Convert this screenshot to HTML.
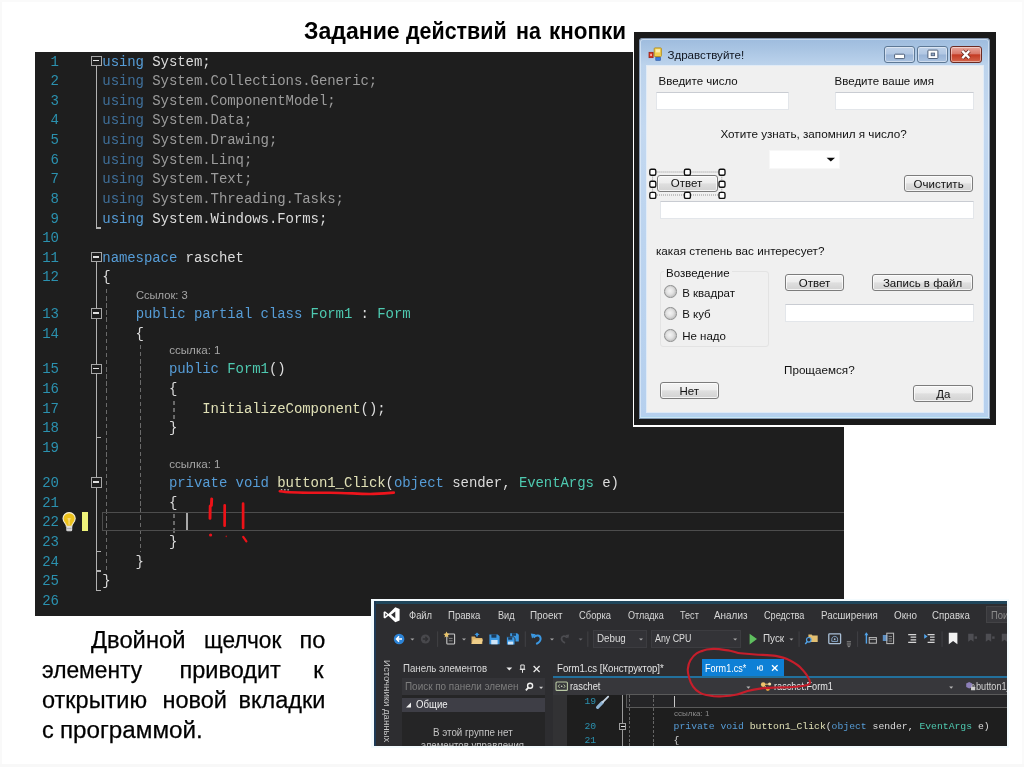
<!DOCTYPE html>
<html lang="ru">
<head>
<meta charset="utf-8">
<title>Задание действий на кнопки</title>
<style>
*{box-sizing:border-box;margin:0;padding:0}
html,body{width:1024px;height:767px;overflow:hidden;background:#fff}
body{position:relative;font-family:"Liberation Sans",sans-serif;color:#000}
.abs{position:absolute}
#edgeL{left:0;top:0;width:2px;height:767px;background:#f9f9f9}
#edgeR{left:1021.5px;top:0;width:2.5px;height:767px;background:#fafafa}
#edgeB{left:0;top:764px;width:1024px;height:3px;background:#f8f8f8}
#edgeT{left:0;top:0;width:1024px;height:2px;background:#fafafa}
.tw{filter:blur(0.25px);top:14px;font-weight:bold;font-size:23.5px;line-height:34px;height:34px;white-space:nowrap;color:#000;transform-origin:0 50%}
/* ---------- big code editor ---------- */
#code{left:34.5px;top:51.5px;width:809.7px;height:564.7px;background:#1e1e1e;overflow:hidden;font-family:"Liberation Mono",monospace;font-size:14px;letter-spacing:-0.0714px;color:#dcdcdc}
#codei{position:absolute;left:0;top:0;width:100%;height:100%;filter:blur(0.35px)}
#code .l{position:absolute;left:0;width:810px;height:19.63px;line-height:19.63px;white-space:pre}
#code .n{position:absolute;left:0;width:24.3px;text-align:right;color:#2b91af}
#code .t{position:absolute;left:67.8px}
#code .cl{position:absolute;font-family:"Liberation Sans",sans-serif;font-size:11.2px;letter-spacing:0;color:#a6a6a6;height:16.3px;line-height:16.3px;white-space:pre}
.k{color:#569cd6}.ty{color:#4ec9b0}.m{color:#e0e0b6}
.dk{color:#3f6f99}.dt{color:#9b9b9b}
.vl{position:absolute;width:1.4px;background:#b2b2b2}
.hl{position:absolute;height:1.4px;background:#b2b2b2}
.dg{position:absolute;width:1.6px;background:repeating-linear-gradient(to bottom,#6a6a6a 0,#6a6a6a 4.4px,transparent 4.4px,transparent 7.1px)}
.cb{position:absolute;width:11.2px;height:10.2px;border:1.3px solid #a6a6a6;background:#1e1e1e}
.cb i{position:absolute;left:1.5px;top:3.0px;width:5.6px;height:1.6px;background:#e0e0e0}
/* ---------- bottom-left paragraph ---------- */
.pw{filter:blur(0.25px);font-size:23.5px;line-height:30px;height:30px;white-space:nowrap;color:#000;-webkit-text-stroke:0.25px #000}
</style>
</head>
<body>
<div id="edgeL" class="abs"></div><div id="edgeR" class="abs"></div><div id="edgeB" class="abs"></div><div id="edgeT" class="abs"></div>
<div id="title"><span class="abs tw" style="left:304px;transform:scaleX(0.981)">Задание</span><span class="abs tw" style="left:406.2px;transform:scaleX(0.912)">действий</span><span class="abs tw" style="left:515.8px;transform:scaleX(0.913)">на</span><span class="abs tw" style="left:549px;transform:scaleX(0.954)">кнопки</span></div>
<div id="code" class="abs"><div id="codei">
<div class="l" style="top:1.00px"><span class="n">1</span><span class="t"><span class="k">using</span> System;</span></div>
<div class="l" style="top:20.63px"><span class="n">2</span><span class="t"><span class="dk">using</span><span class="dt"> System.Collections.Generic;</span></span></div>
<div class="l" style="top:40.26px"><span class="n">3</span><span class="t"><span class="dk">using</span><span class="dt"> System.ComponentModel;</span></span></div>
<div class="l" style="top:59.89px"><span class="n">4</span><span class="t"><span class="dk">using</span><span class="dt"> System.Data;</span></span></div>
<div class="l" style="top:79.52px"><span class="n">5</span><span class="t"><span class="dk">using</span><span class="dt"> System.Drawing;</span></span></div>
<div class="l" style="top:99.15px"><span class="n">6</span><span class="t"><span class="dk">using</span><span class="dt"> System.Linq;</span></span></div>
<div class="l" style="top:118.78px"><span class="n">7</span><span class="t"><span class="dk">using</span><span class="dt"> System.Text;</span></span></div>
<div class="l" style="top:138.41px"><span class="n">8</span><span class="t"><span class="dk">using</span><span class="dt"> System.Threading.Tasks;</span></span></div>
<div class="l" style="top:158.04px"><span class="n">9</span><span class="t"><span class="k">using</span> System.Windows.Forms;</span></div>
<div class="l" style="top:177.67px"><span class="n">10</span><span class="t"></span></div>
<div class="l" style="top:197.30px"><span class="n">11</span><span class="t"><span class="k">namespace</span> raschet</span></div>
<div class="l" style="top:216.93px"><span class="n">12</span><span class="t">{</span></div>
<div class="cl" style="left:101.4px;top:235.16px;font-size:11.2px">Ссылок: 3</div>
<div class="l" style="top:253.56px"><span class="n">13</span><span class="t">    <span class="k">public</span> <span class="k">partial</span> <span class="k">class</span> <span class="ty">Form1</span> : <span class="ty">Form</span></span></div>
<div class="l" style="top:273.19px"><span class="n">14</span><span class="t">    {</span></div>
<div class="cl" style="left:134.7px;top:290.92px;font-size:11.6px">ссылка: 1</div>
<div class="l" style="top:308.82px"><span class="n">15</span><span class="t">        <span class="k">public</span> <span class="ty">Form1</span>()</span></div>
<div class="l" style="top:328.45px"><span class="n">16</span><span class="t">        {</span></div>
<div class="l" style="top:348.08px"><span class="n">17</span><span class="t">            <span class="m">InitializeComponent</span>();</span></div>
<div class="l" style="top:367.71px"><span class="n">18</span><span class="t">        }</span></div>
<div class="l" style="top:387.34px"><span class="n">19</span><span class="t"></span></div>
<div class="cl" style="left:134.7px;top:404.87px;font-size:11.6px">ссылка: 1</div>
<div class="l" style="top:422.57px"><span class="n">20</span><span class="t">        <span class="k">private</span> <span class="k">void</span> <span class="m">button1_Click</span>(<span class="k">object</span> sender, <span class="ty">EventArgs</span> e)</span></div>
<div class="l" style="top:442.20px"><span class="n">21</span><span class="t">        {</span></div>
<div class="l" style="top:461.83px"><span class="n">22</span><span class="t"></span></div>
<div class="l" style="top:481.46px"><span class="n">23</span><span class="t">        }</span></div>
<div class="l" style="top:501.09px"><span class="n">24</span><span class="t">    }</span></div>
<div class="l" style="top:520.72px"><span class="n">25</span><span class="t">}</span></div>
<div class="l" style="top:540.35px"><span class="n">26</span><span class="t"></span></div>
<div class="vl" style="left:61.40px;top:11.00px;height:166.17px"></div>
<div class="hl" style="left:61.40px;top:175.77px;width:5.35px"></div>
<div class="vl" style="left:61.40px;top:207.30px;height:332.55px"></div>
<div class="hl" style="left:61.40px;top:385.44px;width:5.35px"></div>
<div class="hl" style="left:61.40px;top:499.19px;width:5.35px"></div>
<div class="hl" style="left:61.40px;top:518.82px;width:5.35px"></div>
<div class="hl" style="left:61.40px;top:538.45px;width:5.35px"></div>
<div class="dg" style="left:71.30px;top:237.56px;height:282.16px"></div>
<div class="dg" style="left:105.00px;top:293.82px;height:206.27px"></div>
<div class="dg" style="left:138.60px;top:349.08px;height:18.63px"></div>
<div class="dg" style="left:138.60px;top:462.83px;height:18.63px"></div>
<div class="cb" style="left:56.10px;top:4.30px"><i></i></div>
<div class="cb" style="left:56.10px;top:200.60px"><i></i></div>
<div class="cb" style="left:56.10px;top:256.86px"><i></i></div>
<div class="cb" style="left:56.10px;top:312.12px"><i></i></div>
<div class="cb" style="left:56.10px;top:425.87px"><i></i></div>
<div class="abs" style="left:67.20px;top:460.40px;width:760px;height:18.90px;border:1.9px solid #4d4d4d"></div>
<div class="abs" style="left:151.50px;top:461.10px;width:1.5px;height:17.6px;background:#a8a8a8"></div>
<div class="abs" style="left:47.40px;top:460.20px;width:6.3px;height:19.4px;background:#eff37a"></div>
<svg class="abs" style="left:0;top:0" width="810" height="564.7" viewBox="34.5 51.5 810 564.7" fill="none">
<!-- lightbulb -->
<g>
<path d="M68.6 512.1c-3.6 0-6.1 2.7-6.1 6 0 2.3 1.2 3.7 2.3 5 0.8 0.9 1 1.6 1 2.6h5.6c0-1 0.2-1.7 1-2.6 1.1-1.3 2.3-2.7 2.3-5 0-3.3-2.5-6-6.1-6z" fill="#edc21c" stroke="#f6efd8" stroke-width="1.1"/>
<path d="M66.9 517.4h3.4l-1 3.2v3.6h-1.4v-3.6z" fill="#f6d978"/>
<rect x="65.8" y="525.8" width="5.9" height="5" rx="1.3" fill="#e6e6e6"/>
<rect x="66.4" y="527.3" width="4.7" height="0.9" fill="#9a9a9a"/>
<rect x="66.4" y="529.2" width="4.7" height="0.8" fill="#b0b0b0"/>
</g>
<!-- suggestion dots -->
<g fill="#bdbdbd"><rect x="280.3" y="488.6" width="1.5" height="1.4"/><rect x="283.6" y="488.6" width="1.5" height="1.4"/><rect x="286.9" y="488.6" width="1.5" height="1.4"/></g>
<!-- red hand-drawn underline -->
<path d="M279.3 490.8c10 1.6 30 1.6 48 1.4 20-0.2 30 1.6 46 1.2 9-0.2 15-0.7 20-1.3" stroke="#ee141c" stroke-width="2.6" stroke-linecap="round"/>
<!-- red strokes -->
<path d="M211.2 498.4l-0.3 6.5l-1.2 0.6l-0.2 12.4" stroke="#ee1218" stroke-width="2.9" stroke-linecap="round" stroke-linejoin="round"/>
<path d="M224.2 504.8l-0.1 20.4" stroke="#ee1218" stroke-width="2.7" stroke-linecap="round"/>
<path d="M242.6 503.2l0 24.2" stroke="#ee1218" stroke-width="2.7" stroke-linecap="round"/>
<circle cx="210.1" cy="534.5" r="1.6" fill="#e8131d"/>
<circle cx="225.8" cy="535.9" r="0.8" fill="#b01318"/>
<path d="M242.7 536.3l3.2 4.6" stroke="#ee1218" stroke-width="2.2" stroke-linecap="round"/>
</svg>


</div></div>
<div id="para">
<span class="abs pw" style="left:91.3px;top:624.66px;transform:scaleX(1.01);transform-origin:0 50%">Двойной</span>
<span class="abs pw" style="left:203.5px;top:624.66px;transform:scaleX(0.965);transform-origin:0 50%">щелчок</span>
<span class="abs pw" style="left:299.5px;top:624.66px">по</span>
<span class="abs pw" style="left:42.0px;top:654.66px;transform:scaleX(0.97);transform-origin:0 50%">элементу</span>
<span class="abs pw" style="left:179.5px;top:654.66px">приводит</span>
<span class="abs pw" style="left:313.3px;top:654.66px">к</span>
<span class="abs pw" style="left:42.0px;top:684.76px">открытию</span>
<span class="abs pw" style="left:162.5px;top:684.76px">новой</span>
<span class="abs pw" style="left:238.5px;top:684.76px">вкладки</span>
<span class="abs pw" style="left:42.0px;top:714.66px">с</span>
<span class="abs pw" style="left:59.5px;top:714.66px;transform:scaleX(1.03);transform-origin:0 50%">программой.</span>
</div>
<style>
#fwrap{left:632.6px;top:30.8px;width:365.2px;height:396.5px;background:#fff}
#fblack{left:634.3px;top:32.4px;width:361.8px;height:393.1px;background:#1a1a1a}
#fframe{left:639.4px;top:37.6px;width:350.8px;height:381.2px;border-radius:4px 4px 1px 1px;background:linear-gradient(to bottom,#9dbbdd 0,#abc6e4 13px,#bcd3ec 27px,#c3d8f0 90px,#bcd4ef 200px,#b6d0ee 381px);box-shadow:inset 0 0 0 1px rgba(70,90,120,.55),inset 0 0 0 2px rgba(230,240,250,.6),inset 0 -3px 0 -0.5px #a6d8ef}
#fclient{left:647px;top:66.2px;width:336.2px;height:345.4px;background:#f0f0f0;box-shadow:0 0 0 1px rgba(255,255,255,.55)}
.ft{font-size:11.5px;line-height:14px;height:14px;white-space:nowrap;color:#111;transform-origin:0 50%}
.ftb{position:absolute;background:#fff;border:1px solid #e3e6ea;border-top-color:#c9ccd2}
.fbtn{position:absolute;border:1px solid #7c7c7c;border-radius:3px;background:linear-gradient(to bottom,#f4f4f4 0,#ededed 46%,#dfdfdf 52%,#d2d2d2 100%);box-shadow:inset 0 0 0 1px rgba(255,255,255,.75);font-size:11.5px;color:#111;text-align:center;white-space:nowrap}
.fbtn span{display:inline-block}
.frad{position:absolute;width:12.6px;height:12.6px;border-radius:50%;border:1px solid #8e8f8f;background:radial-gradient(circle at 45% 45%,#f4f4f4 0,#e2e2e2 40%,#c6c6c6 68%,#ececec 100%)}
.wbtn{position:absolute;top:45.6px;height:17.1px;border:1px solid #5d7895;border-radius:3px;box-shadow:inset 0 0 0 1px rgba(255,255,255,.45)}
</style>
<div id="fwrap" class="abs"></div>
<div id="fblack" class="abs"></div>
<div id="fin" style="position:absolute;left:0;top:0;width:1024px;height:767px;filter:blur(0.3px)">
<div id="fframe" class="abs"></div>
<div id="fclient" class="abs"></div>
<!-- title bar -->
<svg class="abs" style="left:647px;top:46px" width="18" height="16" viewBox="647 46 18 16">
<rect x="654.2" y="47.9" width="7.2" height="8.6" rx="0.8" fill="#f2cf4e" stroke="#b38d1f" stroke-width="0.9"/>
<rect x="655.6" y="49.2" width="4.4" height="3.2" fill="#fbeeb0"/>
<rect x="649" y="52.3" width="4.1" height="5.4" fill="#d9331f" stroke="#8f1e12" stroke-width="0.7"/>
<rect x="650.3" y="53.8" width="1.5" height="2.2" fill="#f7c9c0"/>
<rect x="655.8" y="57.4" width="4.6" height="2.9" fill="#3a7be0" stroke="#244f9a" stroke-width="0.6"/>
</svg>
<div class="abs ft" id="ftitle" style="left:667.4px;top:46.6px;font-size:11.6px;line-height:16px;height:16px;color:#10151f">Здравствуйте!</div>
<div class="wbtn" style="left:884.2px;width:31.2px;background:linear-gradient(to bottom,#c0d2e9 0,#b1c7e3 47%,#99b4d7 53%,#aac2e0 100%)"></div>
<div class="wbtn" style="left:917.4px;width:30.9px;background:linear-gradient(to bottom,#c0d2e9 0,#b1c7e3 47%,#99b4d7 53%,#aac2e0 100%)"></div>
<div class="wbtn" style="left:950.1px;width:31.5px;border-color:#6b2a22;background:linear-gradient(to bottom,#e8a79c 0,#d9786a 46%,#c43a24 52%,#d4664c 100%)"></div>
<svg class="abs" style="left:884px;top:45px" width="100" height="19" viewBox="884 45 100 19">
<rect x="894.6" y="54.2" width="10" height="4.4" rx="0.8" fill="#fff" stroke="#50607a" stroke-width="1"/>
<rect x="927.9" y="50.1" width="10" height="8.4" rx="0.8" fill="#fff" stroke="#50607a" stroke-width="1"/>
<rect x="931.2" y="53.1" width="3.4" height="2.6" fill="#8fa6c6" stroke="#50607a" stroke-width="0.9"/>
<path d="M962.3 50.9l7 7.2M969.3 50.9l-7 7.2" stroke="#5f241b" stroke-width="3.7" fill="none"/><path d="M962.3 50.9l7 7.2M969.3 50.9l-7 7.2" stroke="#fff" stroke-width="2.3" fill="none"/>
</svg>
<!-- row 1 -->
<div class="abs ft" id="fl1" style="left:658.6px;top:73.5px">Введите число</div>
<div class="abs ft" id="fl2" style="left:834.6px;top:73.5px">Введите ваше имя</div>
<div class="ftb" style="left:656.3px;top:92.4px;width:132.4px;height:17.6px"></div>
<div class="ftb" style="left:834.6px;top:92.4px;width:139.2px;height:17.6px"></div>
<div class="abs ft" id="fl3" style="left:720.4px;top:126.6px;font-size:11.7px">Хотите узнать, запомнил я число?</div>
<div class="ftb" style="left:769.2px;top:150.3px;width:70.6px;height:18.5px;border-color:#f7f7f7"></div>
<svg class="abs" style="left:824px;top:155px" width="14" height="9" viewBox="824 155 14 9"><path d="M826.6 157.8h8.4l-4.2 3.6z" fill="#0a0a0a"/></svg>
<!-- button with selection handles -->
<div class="fbtn" id="fb1" style="left:657px;top:175.3px;width:61.3px;height:16.3px;line-height:14.6px"><span style="position:relative;left:-1.1px">Ответ</span></div>
<svg class="abs" style="left:649px;top:168px" width="78" height="31" viewBox="649 168 78 31" fill="none">
<rect x="652.6" y="172" width="69.2" height="23" stroke="#8a8a8a" stroke-width="0.9" stroke-dasharray="1 1"/>
<g fill="#fff" stroke="#101010" stroke-width="1.35">
<rect x="649.8" y="169.2" width="6" height="6" rx="1.5"/><rect x="684.4" y="169.2" width="6" height="6" rx="1.5"/><rect x="719" y="169.2" width="6" height="6" rx="1.5"/>
<rect x="649.8" y="181.2" width="6" height="6" rx="1.5"/><rect x="719" y="181.2" width="6" height="6" rx="1.5"/>
<rect x="649.8" y="192.4" width="6" height="6" rx="1.5"/><rect x="684.4" y="192.4" width="6" height="6" rx="1.5"/><rect x="719" y="192.4" width="6" height="6" rx="1.5"/>
</g></svg>
<div class="fbtn" id="fb2" style="left:904px;top:174.5px;width:69.2px;height:17.5px;line-height:16.6px"><span>Очистить</span></div>
<div class="ftb" style="left:659.8px;top:201px;width:313.8px;height:17.7px"></div>
<!-- lower part -->
<div class="abs ft" id="fl4" style="left:656px;top:244px;font-size:11.7px">какая степень вас интересует?</div>
<div class="abs" style="left:660px;top:271.3px;width:109.2px;height:75.3px;border:1px solid #e3e3e3;border-radius:3px"></div>
<div class="abs ft" id="fl5" style="left:664px;top:266.2px;background:#f0f0f0;padding:0 2px">Возведение</div>
<div class="frad" style="left:664.3px;top:285.4px"></div>
<div class="frad" style="left:664.3px;top:307.2px"></div>
<div class="frad" style="left:664.3px;top:329px"></div>
<div class="abs ft" id="fr1" style="left:682.2px;top:285.6px">В квадрат</div>
<div class="abs ft" id="fr2" style="left:682.2px;top:307.4px">В куб</div>
<div class="abs ft" id="fr3" style="left:682.2px;top:329.2px">Не надо</div>
<div class="fbtn" id="fb3" style="left:784.8px;top:274.3px;width:59.6px;height:17.1px;line-height:16.8px"><span>Ответ</span></div>
<div class="fbtn" id="fb4" style="left:872px;top:274.3px;width:101.1px;height:17.1px;line-height:16.8px"><span>Запись в файл</span></div>
<div class="ftb" style="left:784.8px;top:304px;width:189px;height:17.8px"></div>
<div class="abs ft" id="fl6" style="left:784px;top:363px;transform:scaleX(1.015)">Прощаемся?</div>
<div class="fbtn" id="fb5" style="left:660px;top:382px;width:58.6px;height:16.9px;line-height:17.6px"><span>Нет</span></div>
<div class="fbtn" id="fb6" style="left:913.4px;top:384.8px;width:59.7px;height:16.9px;line-height:17.2px"><span>Да</span></div>
</div>
<style>
#vswrap{left:371.4px;top:598.8px;width:637.2px;height:149px;background:#f4fbfe}
#vs{left:373.6px;top:601px;width:633.7px;height:145.4px;background:#2d2d30;overflow:hidden}
#vsi{filter:blur(0.55px);position:absolute;left:-373.6px;top:-601px;width:1024px;height:767px;font-size:10px;color:#d2d2d2}
#vsi .a{position:absolute;white-space:nowrap}
#vsi .mn{position:absolute;top:608.6px;height:13px;line-height:13px;font-size:10.2px;color:#d6d6d6;white-space:nowrap;transform-origin:0 50%}
#vsi .tb{position:absolute;white-space:nowrap;font-size:10.2px;line-height:13px;height:13px;color:#dcdcdc}
#vsi .cm{font-family:"Liberation Mono",monospace;font-size:9.75px;letter-spacing:0;white-space:pre;line-height:13px;height:13px;position:absolute;color:#dcdcdc}
</style>
<div id="vswrap" class="abs"></div>
<div id="vs" class="abs"><div id="vsi">
<!-- window edges -->
<div class="a" style="left:372.8px;top:600px;width:636px;height:3.6px;background:#20465b"></div>
<div class="a" style="left:372.6px;top:600px;width:3.8px;height:148px;background:#1e3a56"></div>
<!-- menu bar -->
<svg class="a" style="left:382px;top:606px" width="20" height="18" viewBox="382 606 20 18"><path d="M395.3 607.3l4.3 1.8v11.4l-4.3 1.8l-6.9-6.6l-3.4 2.7l-1.4-0.7v-5.8l1.4-0.7l3.4 2.7zM395.3 611.4l-4.2 3.4l4.2 3.4zM385.3 613.1v3.4l1.8-1.7z" fill="#fff" fill-rule="evenodd"/></svg>
<span class="mn" style="left:409.2px;transform:scaleX(0.922)">Файл</span>
<span class="mn" style="left:448.3px;transform:scaleX(0.941)">Правка</span>
<span class="mn" style="left:497.7px;transform:scaleX(0.900)">Вид</span>
<span class="mn" style="left:530.3px;transform:scaleX(0.968)">Проект</span>
<span class="mn" style="left:578.5px;transform:scaleX(0.920)">Сборка</span>
<span class="mn" style="left:627.7px;transform:scaleX(0.889)">Отладка</span>
<span class="mn" style="left:679.9px;transform:scaleX(0.892)">Тест</span>
<span class="mn" style="left:714.4px;transform:scaleX(0.974)">Анализ</span>
<span class="mn" style="left:764.2px;transform:scaleX(0.895)">Средства</span>
<span class="mn" style="left:821.2px;transform:scaleX(0.959)">Расширения</span>
<span class="mn" style="left:893.6px;transform:scaleX(0.967)">Окно</span>
<span class="mn" style="left:931.8px;transform:scaleX(0.946)">Справка</span>
<div class="a" style="left:986px;top:605.8px;width:30px;height:17.2px;background:#38383c;border:1px solid #434346"></div>
<span class="mn" style="left:990.6px;color:#8c8c8c;transform:scaleX(0.930)">Поиск</span>
<!-- toolbar combos -->
<div class="a" style="left:593.4px;top:630px;width:53.2px;height:17.6px;background:#333337;border:1px solid #3c3c40"></div>
<div class="a" style="left:651.3px;top:630px;width:89.7px;height:17.6px;background:#333337;border:1px solid #3c3c40"></div>
<span class="tb" id="tbdebug" style="left:597.2px;top:632.2px;transform:scaleX(0.959);transform-origin:0 50%">Debug</span>
<span class="tb" id="tbcpu" style="left:654.6px;top:632.2px;transform:scaleX(0.869);transform-origin:0 50%">Any CPU</span>
<span class="tb" id="tbrun" style="left:763.4px;top:632.2px;transform:scaleX(0.970);transform-origin:0 50%">Пуск</span>
<!-- toolbox panel -->
<div class="a" style="left:402.2px;top:659px;width:143.2px;height:90px;background:#252526"></div>
<div class="a" style="left:402.2px;top:659px;width:143.2px;height:19px;background:#2d2d30"></div>
<div class="a" style="left:402.2px;top:678px;width:143.2px;height:17.4px;background:#343438"></div>
<div class="a" style="left:402.2px;top:697.5px;width:143.2px;height:14.9px;background:#3e3e46"></div>
<span class="tb" id="tbx1" style="left:403.4px;top:662px;color:#d8d8d8;transform:scaleX(0.949);transform-origin:0 50%">Панель элементов</span>
<span class="tb" id="tbx2" style="left:404.8px;top:680.2px;color:#7e7e7e;transform:scaleX(0.973);transform-origin:0 50%">Поиск по панели элемен</span>
<span class="tb" id="tbx3" style="left:416.2px;top:698.2px;color:#f0f0f0;transform:scaleX(0.943);transform-origin:0 50%">Общие</span>
<span class="tb" id="tbx4" style="left:433.2px;top:726.2px;color:#c4c4c4;transform:scaleX(0.961);transform-origin:0 50%">В этой группе нет</span>
<span class="tb" id="tbx5" style="left:420.8px;top:739.4px;color:#c4c4c4;transform:scaleX(0.946);transform-origin:0 50%">элементов управления</span>
<div class="a" id="vsrot" style="left:381px;top:659.5px;width:13px;height:90px;writing-mode:vertical-rl;font-size:9.6px;line-height:13px;color:#cacaca;white-space:nowrap">Источники данных</div>
<!-- document well -->
<span class="tb" id="tab1" style="left:556.6px;top:661.6px;color:#e4e4e4;transform:scaleX(0.945);transform-origin:0 50%">Form1.cs [Конструктор]*</span>
<div class="a" style="left:702.2px;top:659.2px;width:81.8px;height:17px;background:#0e80d6"></div>
<span class="tb" id="tab2" style="left:705.2px;top:661.6px;color:#fff;transform:scaleX(0.890);transform-origin:0 50%">Form1.cs*</span>
<div class="a" style="left:552.6px;top:675.9px;width:460px;height:1.7px;background:#22709c"></div>
<div class="a" style="left:552.6px;top:677.7px;width:460px;height:17.2px;background:#37373b"></div>
<span class="tb" id="nav1" style="left:569.8px;top:679.6px;color:#e6e6e6;transform:scaleX(0.910);transform-origin:0 50%">raschet</span>
<span class="tb" id="nav2" style="left:773.6px;top:679.6px;color:#e6e6e6;transform:scaleX(0.897);transform-origin:0 50%">raschet.Form1</span>
<span class="tb" id="nav3" style="left:976.2px;top:679.6px;color:#d0d0d0;transform:scaleX(0.900);transform-origin:0 50%">button1_Click</span>
<!-- editor -->
<div class="a" style="left:552.6px;top:694.9px;width:460px;height:60px;background:#1e1e1e"></div>
<div class="a" style="left:552.6px;top:694.9px;width:14px;height:60px;background:#323234"></div>
<div class="a" style="left:625.6px;top:694.3px;width:390px;height:13.4px;border:1.2px solid #5a5a5a;background:#252527"></div>
<div class="a" style="left:673.8px;top:695.6px;width:1.3px;height:11px;background:#c8c8c8"></div>
<div class="a" style="left:622.1px;top:694.9px;width:1.1px;height:60px;background:#9a9a9a"></div>
<div class="a" style="left:629.2px;top:694.9px;width:1px;height:60px;background:repeating-linear-gradient(to bottom,#666 0,#666 2.6px,transparent 2.6px,transparent 4.4px)"></div>
<div class="a" style="left:653.1px;top:694.9px;width:1px;height:60px;background:repeating-linear-gradient(to bottom,#666 0,#666 2.6px,transparent 2.6px,transparent 4.4px)"></div>
<div class="a" style="left:618.8px;top:722.8px;width:7.6px;height:7.6px;border:1px solid #a0a0a0;background:#1e1e1e"></div>
<div class="a" style="left:620.6px;top:726.1px;width:4px;height:1.1px;background:#e0e0e0"></div>
<span class="cm" style="left:584.4px;top:695.3px;color:#2b91af">19</span>
<span class="cm" style="left:584.4px;top:719.8px;color:#2b91af">20</span>
<span class="cm" style="left:584.4px;top:733.8px;color:#2b91af">21</span>
<span class="a" id="vscl" style="left:674px;top:709.4px;font-size:8px;line-height:10px;color:#8a8a8a">ссылка: 1</span>
<span class="cm" id="vscode" style="left:673.6px;top:719.8px"><span class="k">private</span> <span class="k">void</span> <span class="m">button1_Click</span>(<span class="k">object</span> sender, <span class="ty">EventArgs</span> e)</span>
<span class="cm" style="left:673.6px;top:733.8px">{</span>
<svg class="a" style="left:372.8px;top:600.6px" width="634.5" height="145.8" viewBox="372.8 600.6 634.5 145.8" fill="none">
<!-- nav back / fwd -->
<circle cx="398.9" cy="638.6" r="5.3" fill="#2c83d6"/>
<path d="M401.8 638.6h-5.2M398.9 636l-2.6 2.6l2.6 2.6" stroke="#fff" stroke-width="1.5"/>
<path d="M410.2 638.0h4l-2 2.2z" fill="#a8a8a8"/>
<circle cx="425.2" cy="638.6" r="4.6" fill="#48484c"/>
<path d="M422.6 638.6h4.6M425.2 636.4l2.2 2.2l-2.2 2.2" stroke="#2f2f32" stroke-width="1.3"/>
<rect x="437" y="631" width="0.9" height="15.5" fill="#434347"/>
<!-- new project -->
<rect x="446.6" y="633.6" width="7.8" height="10" rx="0.8" fill="#2d2d30" stroke="#c9c9c9" stroke-width="1.1"/>
<path d="M448.6 638h3.8M448.6 640.4h3.8" stroke="#9a9a9a" stroke-width="0.8"/>
<path d="M446.3 631.2l1 2l2.1 0.3l-1.6 1.4l0.5 2.1l-2-1.1l-2 1.1l0.5-2.1l-1.6-1.4l2.1-0.3z" fill="#e9c46a"/>
<path d="M461.8 638.0h4l-2 2.2z" fill="#a8a8a8"/>
<!-- open -->
<path d="M471.3 643.6v-7.4h3.4l1 1.3h6.4v6.1z" fill="#dcb368"/>
<path d="M471.3 643.6l1.9-4.4h9.6l-1.7 4.4z" fill="#f0cf8a"/>
<path d="M476.8 632.2l2.6 2.4h-1.7v1.6h-1.8v-1.6h-1.7z" fill="#3a96e0"/>
<!-- save -->
<path d="M489.2 634h8.3l1.9 1.9v8h-10.2z" fill="#3b98e2"/>
<rect x="491.2" y="634" width="5" height="3.3" fill="#1d3d5c"/><rect x="491" y="639.6" width="6.4" height="4.3" fill="#cfe4f7"/>
<!-- save all -->
<path d="M510 632.8h7l1.6 1.6v6.6h-8.6z" fill="#3b98e2"/>
<rect x="511.8" y="632.8" width="4" height="2.6" fill="#1d3d5c"/>
<path d="M506.2 636.4h7l1.6 1.6v6.6h-8.6z" fill="#3b98e2" stroke="#2d2d30" stroke-width="0.9"/>
<rect x="508" y="636.9" width="4" height="2.4" fill="#1d3d5c"/><rect x="507.8" y="641.2" width="5.2" height="2.9" fill="#cfe4f7"/>
<rect x="524.6" y="631" width="0.9" height="15.5" fill="#434347"/>
<!-- undo -->
<path d="M533.4 637.2c2.2-3 6.6-2.6 7 0.8c0.3 2.4-1.6 4.2-4.4 5.6" stroke="#3b98e2" stroke-width="2"/>
<path d="M530.6 633.2l4.9 0.6l-3.6 4.2z" fill="#3b98e2"/>
<path d="M549.8 638.0h4l-2 2.2z" fill="#a8a8a8"/>
<path d="M566.8 637.4c-1.7-2.4-5.2-2.1-5.5 0.6c-0.2 1.9 1.3 3.4 3.5 4.5" stroke="#4c4c50" stroke-width="1.7"/>
<path d="M569 634.2l-3.9 0.5l2.9 3.3z" fill="#4c4c50"/>
<path d="M578.4 638.0h4l-2 2.2z" fill="#6a6a6e"/>
<rect x="587.2" y="631" width="0.9" height="15.5" fill="#434347"/>
<path d="M638.8 638.0h4l-2 2.2z" fill="#a8a8a8"/>
<path d="M733.0 638.0h4l-2 2.2z" fill="#a8a8a8"/>
<!-- run -->
<path d="M749.4 633.4l7.4 5.3l-7.4 5.3z" fill="#5fbf5f"/>
<path d="M789.2 638.0h4l-2 2.2z" fill="#a8a8a8"/>
<rect x="798.4" y="631" width="0.9" height="15.5" fill="#434347"/>
<!-- find in files -->
<path d="M808.2 641.6v-7.6h3.2l0.9 1.1h5.2v6.5z" fill="#e2bf72"/>
<circle cx="808.6" cy="639.4" r="2.3" fill="#2d2d30" stroke="#52a4ea" stroke-width="1.2"/>
<path d="M807 641.2l-1.9 2.4" stroke="#52a4ea" stroke-width="1.5"/>
<!-- monitor-ish -->
<rect x="828.6" y="633.4" width="11.8" height="9.8" rx="0.8" stroke="#a9bfd6" stroke-width="1.3"/>
<path d="M831.6 641v-2.2c0-1.6 1.2-2.8 2.9-2.8s2.9 1.2 2.9 2.8v2.2z" stroke="#86a6c8" stroke-width="1"/>
<circle cx="834.5" cy="638.8" r="0.9" fill="#a9bfd6"/>
<path d="M846.6 641.4h4.2M846.6 643.6h4.2" stroke="#9a9a9a" stroke-width="0.9"/><path d="M846.7 645.0h4l-2 2.2z" fill="#8a8a8a"/>
<rect x="857" y="631" width="0.9" height="15.5" fill="#434347"/>
<!-- misc icons -->
<path d="M866.2 632.4v10.8" stroke="#52a4ea" stroke-width="1.4"/><path d="M864.2 634.8l2-2.6l2 2.6z" fill="#52a4ea"/>
<rect x="869" y="637.2" width="7.2" height="5.6" stroke="#bdbdbd" stroke-width="1"/><path d="M869 639h7" stroke="#bdbdbd" stroke-width="0.8"/>
<rect x="882.6" y="634.6" width="4.6" height="6" fill="#5d8fc2"/><rect x="886.6" y="632.8" width="6.8" height="10.4" stroke="#bdbdbd" stroke-width="1"/><path d="M888.4 636h3.4M888.4 638.4h3.4M888.4 640.6h3.4" stroke="#a0a0a0" stroke-width="0.8"/>
<path d="M908 634.2h8M910.4 636.8h5.6M910.4 639.4h5.6M908 642h8" stroke="#d6d6d6" stroke-width="1.2"/>
<path d="M927.4 634.2h7M929.8 636.8h4.6M929.8 639.4h4.6M927.4 642h7" stroke="#d6d6d6" stroke-width="1.2"/><path d="M924 633.6l3.4 2.4l-3.4 2.4z" fill="#52a4ea"/>
<rect x="941.4" y="631" width="0.9" height="15.5" fill="#434347"/>
<path d="M948.6 632.4h8.6v11.4l-4.3-3.2l-4.3 3.2z" fill="#f2f2f2"/>
<g fill="#4e4e53"><path d="M968 633.4h5.4v8l-2.7-2l-2.7 2z"/><rect x="974.4" y="636" width="2.4" height="2.4"/>
<path d="M985.6 633.4h5.4v8l-2.7-2l-2.7 2z"/><rect x="992" y="636" width="2.4" height="2.4"/>
<path d="M1001.6 633.4h5.4v8l-2.7-2l-2.7 2z"/></g>
<!-- toolbox header glyphs -->
<path d="M506.2 667h5.8l-2.9 3.1z" fill="#ececec"/>
<path d="M520.6 664.6h3.4v4.2h-3.4zM519.6 669h5.4M522.3 669.2v3.2" stroke="#e6e6e6" stroke-width="1"/>
<path d="M533.4 665.6l6 6M539.4 665.6l-6 6" stroke="#e6e6e6" stroke-width="1.3"/>
<circle cx="529.9" cy="685.3" r="2.5" stroke="#f0f0f0" stroke-width="1.4"/><path d="M528.2 687.2l-2.6 2.8" stroke="#f0f0f0" stroke-width="1.7"/>
<path d="M538.9 686.4h4l-2 2.2z" fill="#c8c8c8"/>
<path d="M410.8 702.2v5h-5z" fill="#f0f0f0"/>
<!-- active tab glyphs -->
<path d="M757.4 665.8v3.6M757.4 667.6h2.2M759.6 665.4v4.4h2.6v-4.4z" stroke="#fff" stroke-width="0.9"/>
<path d="M771.8 664.8l5.6 5.6M777.4 664.8l-5.6 5.6" stroke="#fff" stroke-width="1.3"/>
<!-- nav bar icons -->
<rect x="555.8" y="681.6" width="11.4" height="8.4" rx="1" stroke="#b9c9a4" stroke-width="1.1"/>
<path d="M559.6 684l-1.6 1.8l1.6 1.8M563.4 684l1.6 1.8l-1.6 1.8" stroke="#b9c9a4" stroke-width="0.9"/><circle cx="561.5" cy="685.8" r="0.8" fill="#dfe8d2"/>
<path d="M746.2 686.2h4l-2 2.2z" fill="#b4b4b4"/><path d="M949.0 686.2h4l-2 2.2z" fill="#b4b4b4"/>
<g><circle cx="763" cy="684.2" r="2.3" fill="#f0c46c"/><circle cx="767.6" cy="688.4" r="2.1" fill="#e8a33e"/><circle cx="769.4" cy="683.6" r="1.6" fill="#f6e0a8"/><path d="M764.4 685.6l2.2 1.8M764.8 683.8l3.2 0" stroke="#f0c46c" stroke-width="1"/></g>
<g><path d="M966 683.2l3-1.5l3 1.5v3.4l-3 1.5l-3-1.5z" fill="#8c7fb8"/><rect x="970.8" y="686.4" width="4.2" height="3.4" rx="0.5" fill="#cfcfcf"/><path d="M971.8 686.4v-1.2a1.1 1.1 0 0 1 2.2 0v1.2" stroke="#cfcfcf" stroke-width="0.8"/></g>
<!-- screwdriver -->
<path d="M597.4 707l4.8-5" stroke="#8fb4d4" stroke-width="3.2" stroke-linecap="round"/>
<path d="M602.6 701.6l5.4-5.4" stroke="#c6d4e2" stroke-width="1.8" stroke-linecap="round"/>
</svg>

<svg class="a" style="left:372.8px;top:600.6px" width="634.5" height="145.8" viewBox="372.8 600.6 634.5 145.8" fill="none">
<path d="M700.8 650.9C705 649 709.5 648.4 714 648.5C719.5 648.6 724.5 649.6 729.8 650.3C733.5 650.9 736.8 652.6 740.3 652.9C746 653.5 752 654 757.9 654.3C764 654.6 770 654.5 775.5 655.5C780.5 656.4 785.5 657.6 789.5 659.9C793.8 662.2 797.4 664 800 666.9C802.8 669.8 805.6 672.4 807.1 675.7C808.4 678.2 810.4 680.6 809.7 682.7C809 684.6 806.2 685 803.6 685.4C800.2 686 796.6 686.4 793 686.6C787.2 687 781.4 686.9 775.5 687.1C770.8 687.3 766 687.4 761.4 688C756.6 688.6 751.8 689.4 747.3 690.6C743.6 691.6 740.4 693.3 736.8 694.2C732.2 695.3 727.4 695.9 722.7 695.9C718.6 695.9 714.4 696.2 710.4 695.4C706.6 694.7 703 694.2 699.9 692.4C697 690.8 694.6 688.8 692.9 686.2C691 683.6 689.8 680.6 689 677.5C688.2 674.6 687.3 671.7 687.6 668.7C687.9 665.6 688.6 662.5 690.2 659.9C691.8 657.2 693.6 654.6 696.4 652.9C698.2 651.8 700.4 650.9 702.6 650.6" stroke="#c61e2b" stroke-width="2.1" stroke-linecap="round" stroke-linejoin="round"/>
</svg>

</div></div>
</body></html>
